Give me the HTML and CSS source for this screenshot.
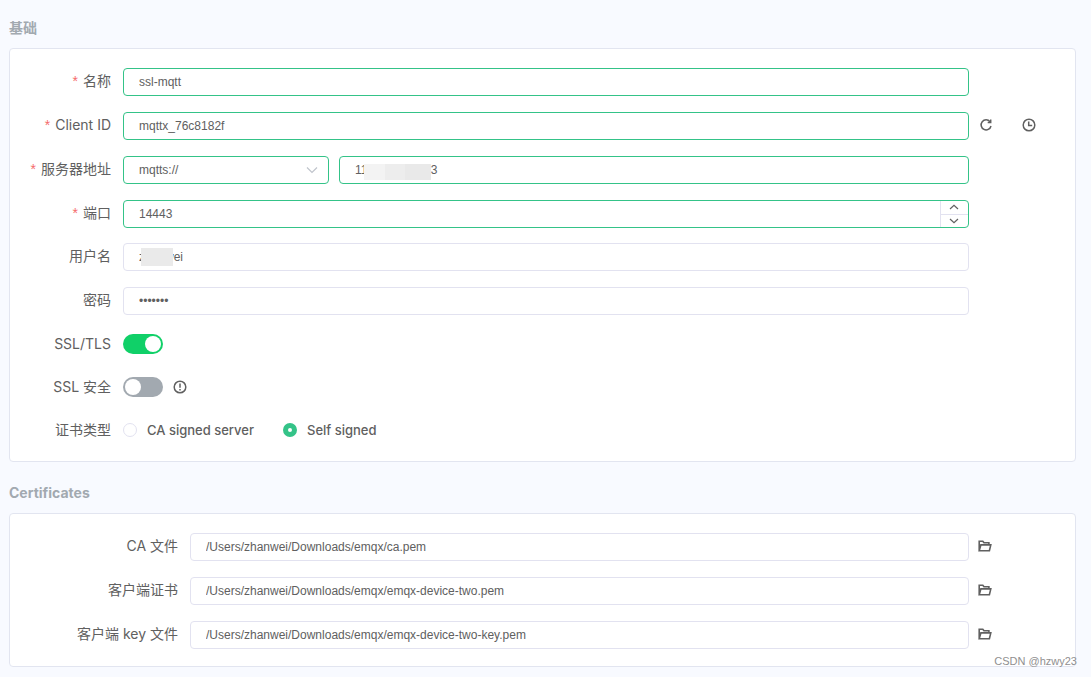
FILE: index.html
```html
<!DOCTYPE html>
<html lang="zh-CN">
<head>
<meta charset="utf-8">
<title>MQTT 连接</title>
<link rel="stylesheet" href="styles.css">
</head>
<body>
<svg class="sprite" aria-hidden="true">
  <symbol id="folder" viewBox="0 0 14 12">
    <path d="M1.200 10.800V1.200H4.800l1.200 1.600h4.900v2M1.200 10.800 2.900 4.900h9.900l-1.400 5.900z"/>
  </symbol>
</svg>
<main class="page">
  <section class="section">
    <h2 class="section-title">基础</h2>
    <form class="card basic">
      <div class="row">
        <label class="label required" for="name">名称</label>
        <input class="field valid" id="name" type="text" value="ssl-mqtt">
      </div>
      <div class="row">
        <label class="label required" for="client">Client ID</label>
        <input class="field valid" id="client" type="text" value="mqttx_76c8182f">
        <div class="actions">
          <button class="icon-button" type="button" aria-label="刷新">
            <svg class="icon" viewBox="0 0 14 14"><path d="M11 3.700A5 5 0 1 0 12 8"/><path d="M11.700 1.500v3H8.700"/></svg>
          </button>
          <button class="icon-button" type="button" aria-label="时间">
            <svg class="icon" viewBox="0 0 14 14"><circle cx="7" cy="7" r="5.800"/><path d="M6.700 3.400v4h3.500"/></svg>
          </button>
        </div>
      </div>
      <div class="row">
        <label class="label required" for="host">服务器地址</label>
        <div class="address">
          <div class="select-wrap">
            <select class="field valid" aria-label="协议"><option>mqtts://</option></select>
            <svg class="arrow" viewBox="0 0 12 8"><path d="M1 1.5 6 6.5 11 1.5"/></svg>
          </div>
          <div class="masked">
            <input class="field valid" id="host" type="text" value="11&nbsp;&nbsp;&nbsp;&nbsp;&nbsp;&nbsp;&nbsp;&nbsp;&nbsp;&nbsp;&nbsp;&nbsp;&nbsp;&nbsp;&nbsp;&nbsp;&nbsp;&nbsp;&nbsp;3">
            <span class="mask mask-host"></span>
          </div>
        </div>
      </div>
      <div class="row port">
        <label class="label required" for="port">端口</label>
        <div class="number field valid">
          <input class="number-input" id="port" type="text" inputmode="numeric" value="14443">
          <div class="stepper">
            <button class="step" type="button" aria-label="增加"><svg viewBox="0 0 10 6"><path d="M1 5 5 1.300 9 5"/></svg></button>
            <button class="step" type="button" aria-label="减少"><svg viewBox="0 0 10 6"><path d="M1 1 5 4.700 9 1"/></svg></button>
          </div>
        </div>
      </div>
      <div class="row">
        <label class="label" for="user">用户名</label>
        <div class="masked">
          <input class="field" id="user" type="text" value="zhanwei">
          <span class="mask mask-user"></span>
        </div>
      </div>
      <div class="row">
        <label class="label" for="password">密码</label>
        <input class="field" id="password" type="password" value="zhanwei">
      </div>
      <div class="row choice">
        <label class="label" for="tls">SSL/TLS</label>
        <div class="controls"><input class="switch" id="tls" type="checkbox" role="switch" checked></div>
      </div>
      <div class="row choice">
        <label class="label" for="secure">SSL 安全</label>
        <div class="controls">
          <input class="switch" id="secure" type="checkbox" role="switch">
          <svg class="icon" viewBox="0 0 14 14"><circle cx="7" cy="7" r="5.800"/><path d="M7 3.500v4.300M7 9v1.400"/></svg>
        </div>
      </div>
      <div class="row choice" role="radiogroup" aria-labelledby="cert-type">
        <span class="label" id="cert-type">证书类型</span>
        <div class="radios">
          <label class="radio-label"><input class="radio" type="radio" name="cert">CA signed server</label>
          <label class="radio-label"><input class="radio" type="radio" name="cert" checked>Self signed</label>
        </div>
      </div>
    </form>
  </section>
  <section class="section">
    <h2 class="section-title">Certificates</h2>
    <form class="card certificates">
      <div class="row">
        <label class="label" for="ca">CA 文件</label>
        <input class="field" id="ca" type="text" value="/Users/zhanwei/Downloads/emqx/ca.pem">
        <div class="actions"><button class="icon-button" type="button" aria-label="选择文件"><svg class="folder"><use href="#folder"/></svg></button></div>
      </div>
      <div class="row">
        <label class="label" for="cert">客户端证书</label>
        <input class="field" id="cert" type="text" value="/Users/zhanwei/Downloads/emqx/emqx-device-two.pem">
        <div class="actions"><button class="icon-button" type="button" aria-label="选择文件"><svg class="folder"><use href="#folder"/></svg></button></div>
      </div>
      <div class="row">
        <label class="label" for="key">客户端 key 文件</label>
        <input class="field" id="key" type="text" value="/Users/zhanwei/Downloads/emqx/emqx-device-two-key.pem">
        <div class="actions"><button class="icon-button" type="button" aria-label="选择文件"><svg class="folder"><use href="#folder"/></svg></button></div>
      </div>
    </form>
  </section>
  <span class="watermark">CSDN @hzwy23</span>
</main>
</body>
</html>
```
FILE: styles.css
```css
* { box-sizing: border-box; }
body {
  margin: 0;
  background: #f8faff;
  color: #606060;
  font-family: Inter, "Noto Sans CJK SC", sans-serif;
  font-size: 14px;
}
.sprite { display: none; }
.page {
  position: relative;
  display: flex;
  flex-direction: column;
  gap: 21px;
  padding: 18px 15px 10px 9px;
}
.section { display: flex; flex-direction: column; gap: 10px; }
.section-title {
  margin: 0;
  color: #a2a9b0;
  font-size: 14px;
  font-weight: 700;
  line-height: 20px;
}
.card {
  display: flex;
  flex-direction: column;
  gap: 16px;
  padding: 19px 0 17px;
  border: 1px solid #e2e5f0;
  border-radius: 4px;
  background: #fff;
}
.row {
  display: grid;
  grid-template-columns: 101px minmax(0, 1fr) 94px;
  column-gap: 12px;
  align-items: center;
  min-height: 28px;
}
.port { margin-bottom: -1px; }
.choice { min-height: 27px; padding-bottom: 1px; }
.certificates .row { grid-template-columns: 168px minmax(0, 1fr) 94px; }
.label { line-height: 20px; padding-bottom: 2px; text-align: right; white-space: nowrap; }
.choice .label { padding-bottom: 0; }
.required::before {
  content: "*";
  margin-right: 5px;
  color: #f56c6c;
  font-family: "Liberation Sans", Arial, sans-serif;
}
.field {
  display: block;
  width: 100%;
  height: 28px;
  padding: 0 15px;
  border: 1px solid #e2e2f0;
  border-radius: 4px;
  outline: none;
  background: #fff;
  color: #606060;
  font: 12px "Liberation Sans", Arial, sans-serif;
}
.valid { border-color: #34c388; }
select.field { appearance: none; }
.address { display: grid; grid-template-columns: 206px minmax(0, 1fr); gap: 10px; }
.select-wrap, .masked { position: relative; }
.arrow {
  position: absolute;
  top: 10px;
  right: 11px;
  width: 12px;
  height: 8px;
  fill: none;
  stroke: #c0c4cc;
  stroke-width: 1.2;
  pointer-events: none;
}
.mask { position: absolute; background: #eaeaea; }
.mask-user { left: 18px; top: 5px; width: 32px; height: 18px; }
.mask-host {
  left: 25px;
  top: 8px;
  width: 67px;
  height: 16px;
  background: linear-gradient(90deg, #f3f3f3 0 31%, #ededed 31% 61%, #e9e9e9 61%);
}
.number { display: flex; padding-right: 0; }
.number-input {
  flex: 1;
  min-width: 0;
  padding: 0;
  border: 0;
  outline: none;
  background: none;
  color: inherit;
  font: inherit;
}
.stepper { display: flex; flex-direction: column; width: 28px; border-left: 1px solid #e2e2f0; }
.step {
  display: flex;
  flex: 1;
  align-items: center;
  justify-content: center;
  padding: 0 1px 0 0;
  border: 0;
  background: none;
}
.step + .step { border-top: 1px solid #e2e2f0; }
.step svg { width: 10px; height: 6px; fill: none; stroke: #606060; stroke-width: 1.2; }
.actions { display: flex; gap: 29px; padding-bottom: 2px; margin-left: -2px; }
.certificates .actions { margin-left: -3px; }
.icon-button { display: flex; padding: 0; border: 0; background: none; }
.icon { width: 14px; height: 14px; fill: none; stroke: #606060; stroke-width: 1.5; }
.folder { width: 14px; height: 12px; fill: none; stroke: #606060; stroke-width: 1.6; }
.controls { display: flex; align-items: center; gap: 10px; }
.switch {
  appearance: none;
  display: flex;
  width: 40px;
  height: 20px;
  margin: 0;
  padding: 2px;
  border-radius: 10px;
  background: #a2a9b0;
}
.switch::before { content: ""; width: 16px; height: 16px; border-radius: 50%; background: #fff; }
.switch:checked { justify-content: flex-end; background: #10d068; }
.radios { display: flex; gap: 29px; }
.radio-label { display: flex; align-items: center; gap: 10px; font-size: 13px; font-weight: 500; }
.radio {
  appearance: none;
  width: 14px;
  height: 14px;
  margin: 0;
  border: 1px solid #e2e2f0;
  border-radius: 50%;
  background: #fff;
}
.radio:checked { border: 5px solid #34c388; }
.watermark {
  position: absolute;
  right: 14px;
  bottom: 9px;
  color: #909090;
  font: 11px/14px "Liberation Sans", Arial, sans-serif;
}
```
